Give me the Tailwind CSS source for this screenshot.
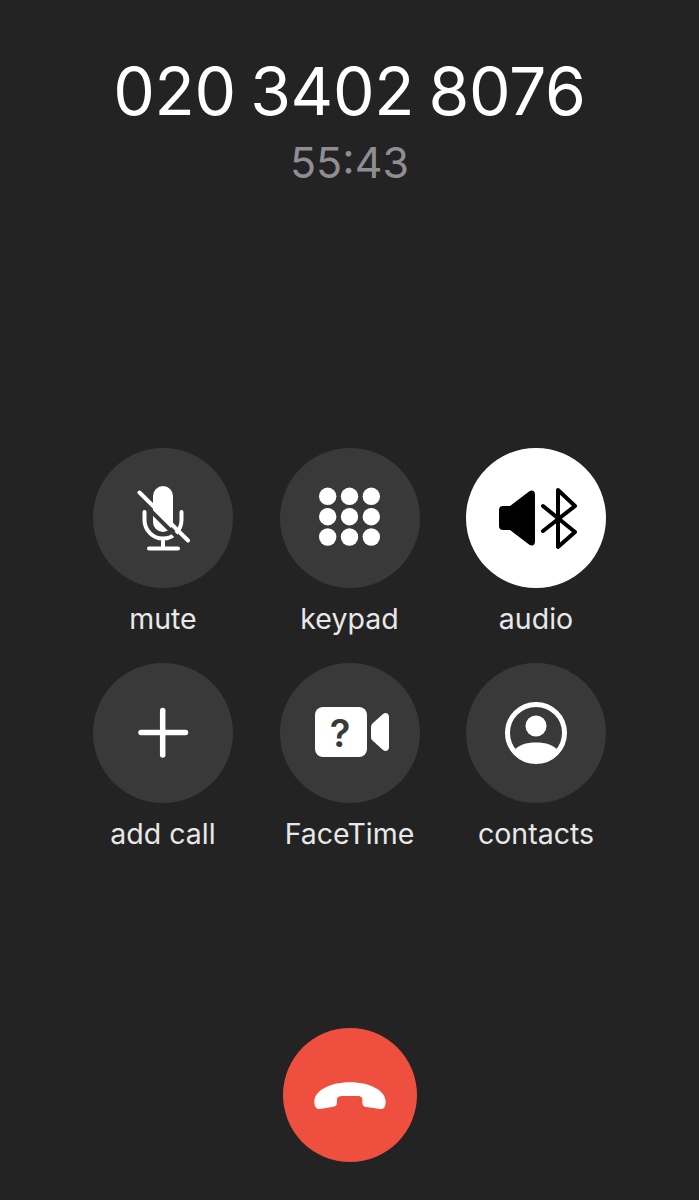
<!DOCTYPE html>
<html>
<head>
<meta charset="utf-8">
<script src="https://cdn.jsdelivr.net/npm/@tailwindcss/browser@4"></script>
</head>
<body class="m-0">
<main class="w-[699px] h-[1200px] bg-[#232323] overflow-hidden flex flex-col items-center font-['Inter',sans-serif]">
  <h1 class="mt-[55px] h-[72px] leading-[72px] text-[66px] font-normal text-white text-center whitespace-nowrap tracking-[-0.3px] [word-spacing:-4px]">020 3402 8076</h1>
  <p class="mt-[10px] h-[50px] leading-[50px] text-[43px] text-[#8e8e93] text-center">55:43</p>

  <section class="mt-[261px] grid grid-cols-[140px_140px_140px] gap-x-[46.5px] w-[513px]">
    <div class="flex flex-col items-center h-[215px]">
      <div class="w-[140px] h-[140px] rounded-full bg-[#393939]">
        <svg viewBox="0 0 140 140" class="w-[140px] h-[140px]" fill="none" stroke-linecap="round">
          <rect x="60" y="38" width="20" height="46" rx="10" fill="#fff"/>
          <path d="M51.500 64v8a18.500 18.500 0 0 0 37 0v-8M70 91v9M56 100.500h29" stroke="#fff" stroke-width="4"/>
          <path d="M43 48 91 96" stroke="#393939" stroke-width="4"/>
          <path d="M46.500 44.500 95 92.500" stroke="#fff" stroke-width="4"/>
        </svg>
      </div>
      <span class="mt-[15px] text-[28.5px] leading-[32px] text-[#e8e8e8]">mute</span>
    </div>
    <div class="flex flex-col items-center h-[215px]">
      <div class="w-[140px] h-[140px] rounded-full bg-[#393939]">
        <svg viewBox="0 0 140 140" class="w-[140px] h-[140px]" fill="#fff">
          <circle cx="47.700" cy="48.300" r="8.700"/><circle cx="69.500" cy="48.300" r="8.700"/><circle cx="91.300" cy="48.300" r="8.700"/>
          <circle cx="47.700" cy="68.700" r="8.700"/><circle cx="69.500" cy="68.700" r="8.700"/><circle cx="91.300" cy="68.700" r="8.700"/>
          <circle cx="47.700" cy="89" r="8.700"/><circle cx="69.500" cy="89" r="8.700"/><circle cx="91.300" cy="89" r="8.700"/>
        </svg>
      </div>
      <span class="mt-[15px] text-[28.5px] leading-[32px] text-[#e8e8e8]">keypad</span>
    </div>
    <div class="flex flex-col items-center h-[215px]">
      <div class="w-[140px] h-[140px] rounded-full bg-white">
        <svg viewBox="0 0 140 140" class="w-[140px] h-[140px]" fill="none">
          <path d="M33 62a4 4 0 0 1 4-4h7l19-14.500c3-2 6-1 6 3v47c0 4-3 5-6 3L44 82h-7a4 4 0 0 1-4-4z" fill="#000"/>
          <path d="M77 58l32 26-17 15V42l17 16-32 25" stroke="#000" stroke-width="4" stroke-linecap="round" stroke-linejoin="round"/>
        </svg>
      </div>
      <span class="mt-[15px] text-[28.5px] leading-[32px] text-[#e8e8e8]">audio</span>
    </div>
    <div class="flex flex-col items-center h-[215px]">
      <div class="w-[140px] h-[140px] rounded-full bg-[#393939]">
        <svg viewBox="0 0 140 140" class="w-[140px] h-[140px]" fill="none" stroke="#fff" stroke-width="5.500" stroke-linecap="round">
          <path d="M48 69.500h44.500M69.700 47.500v44.500"/>
        </svg>
      </div>
      <span class="mt-[15px] text-[28.5px] leading-[32px] text-[#e8e8e8]">add call</span>
    </div>
    <div class="flex flex-col items-center h-[215px]">
      <div class="w-[140px] h-[140px] rounded-full bg-[#393939]">
        <svg viewBox="0 0 140 140" class="w-[140px] h-[140px]">
          <rect x="35" y="44" width="52" height="50" rx="8" fill="#fff"/>
          <path d="M91 64c0-2 1-3 2-4l10-9c2.500-2 6-1 6 3v30c0 4-3.500 5-6 3l-10-9c-1-1-2-2-2-4z" fill="#fff"/>
          <text x="60" y="84" text-anchor="middle" font-family="Inter, sans-serif" font-weight="600" font-size="38" fill="#393939">?</text>
        </svg>
      </div>
      <span class="mt-[15px] text-[28.5px] leading-[32px] text-[#e8e8e8]">FaceTime</span>
    </div>
    <div class="flex flex-col items-center h-[215px]">
      <div class="w-[140px] h-[140px] rounded-full bg-[#393939]">
        <svg viewBox="0 0 140 140" class="w-[140px] h-[140px]">
          <circle cx="70" cy="70" r="28.500" fill="none" stroke="#fff" stroke-width="5"/>
          <circle cx="70" cy="63" r="10.500" fill="#fff"/>
          <path d="M47.500 88C52 82 60 79.500 70 79.500S88 82 92.500 88C87 95 79 100 70 100S53 95 47.500 88z" fill="#fff"/>
        </svg>
      </div>
      <span class="mt-[15px] text-[28.5px] leading-[32px] text-[#e8e8e8]">contacts</span>
    </div>
  </section>

  <div class="mt-[150px] w-[134px] h-[134px] rounded-full bg-[#ee4f3f]">
    <svg viewBox="24 24 402 402" class="w-[134px] h-[134px]">
      <path d="M118 245C118 215 160 187 225 187C290 187 332 215 332 245C332 262 325 268 315 267L275 261C265 260 262 255 262 245L262 238C262 230 255 228 245 228L205 228C195 228 186 230 186 238L186 247C186 256 182 259 175 260L135 267C125 268 118 260 118 245Z" fill="#fff"/>
    </svg>
  </div>
</main>
</body>
</html>
